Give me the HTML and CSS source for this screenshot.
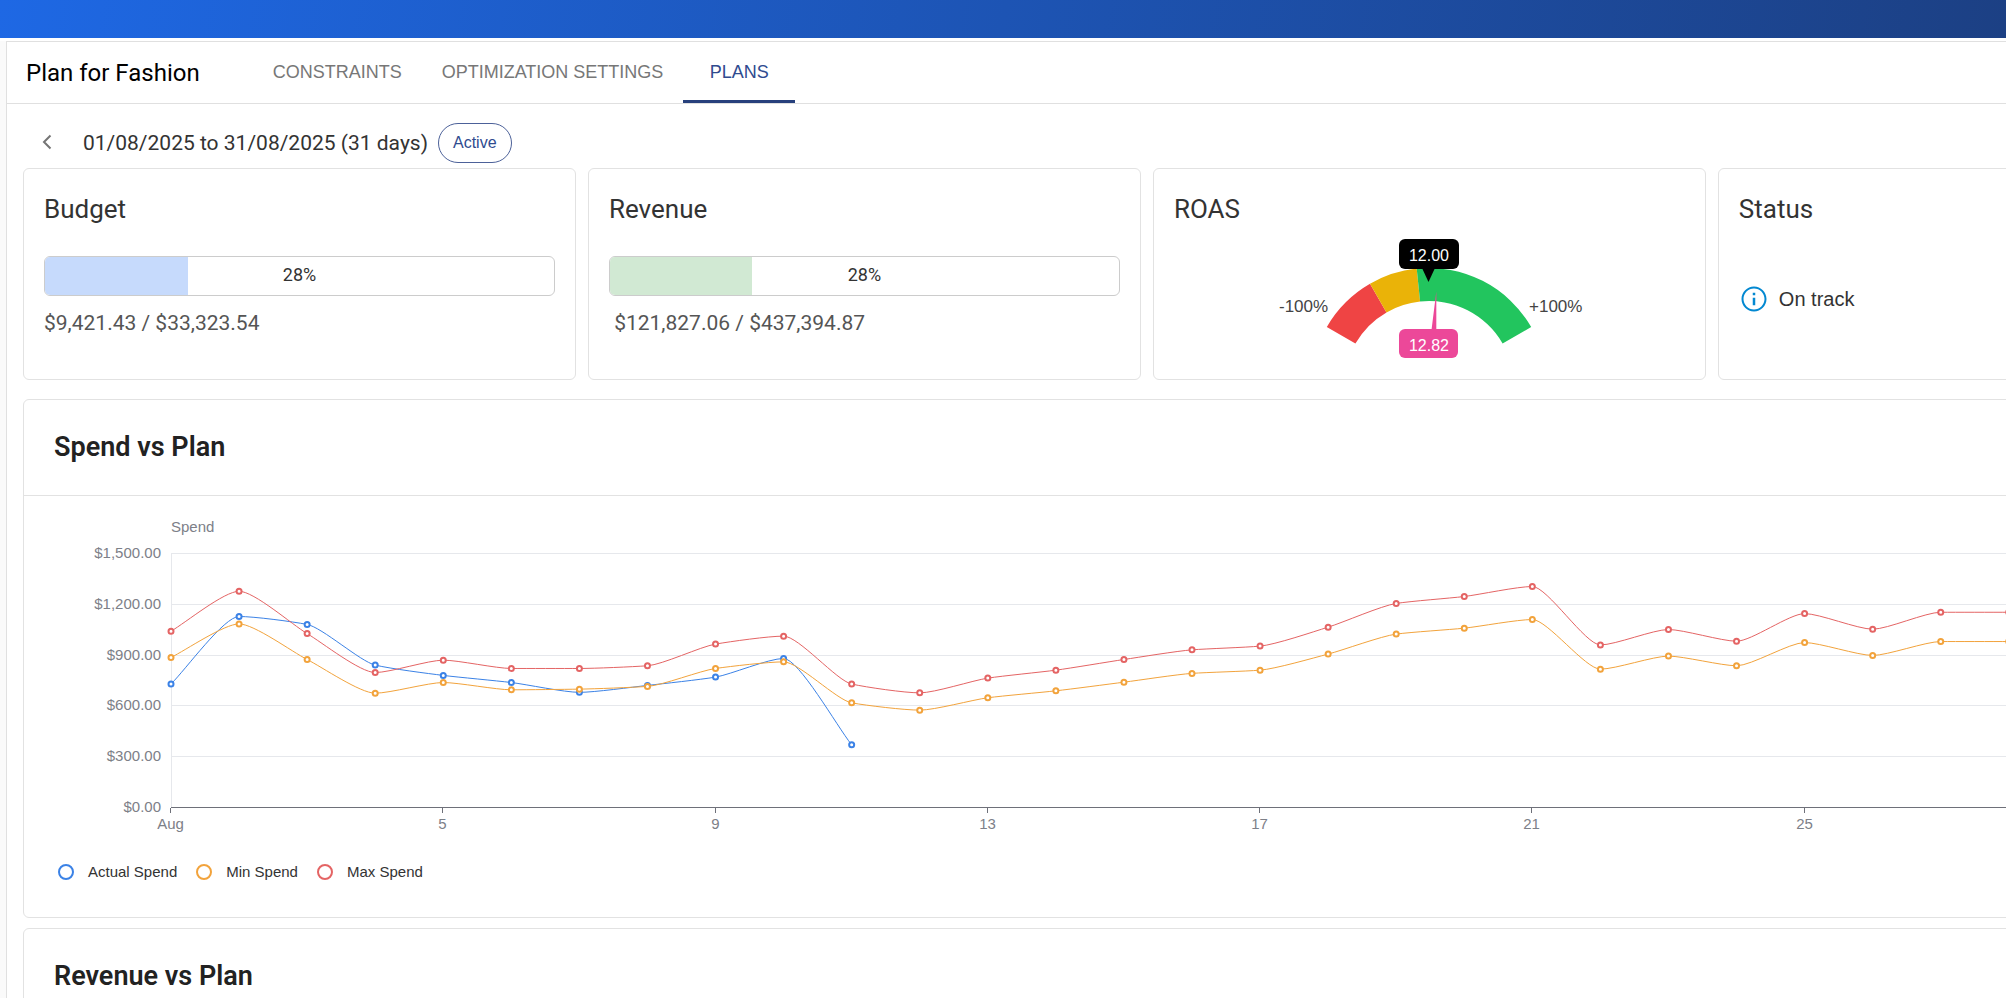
FILE: index.html
```html
<!DOCTYPE html>
<html lang="en">
<head>
    <meta charset="UTF-8">
    <meta name="viewport" content="width=device-width, initial-scale=1.0">
    <title>Plan for Fashion</title>
    <link rel="stylesheet" href="styles.css">
</head>
<body>
    <header class="top-bar"></header>

    <main class="page">
        <div class="page-header">
            <h1>Plan for Fashion</h1>
            <nav class="tabs">
                <button class="tab" type="button">CONSTRAINTS</button>
                <button class="tab" type="button">OPTIMIZATION SETTINGS</button>
                <button class="tab active" type="button">PLANS</button>
            </nav>
        </div>

        <div class="page-content">
            <div class="plan-row">
                <button class="back-btn" type="button" aria-label="Back">
                    <svg width="10" height="16" viewBox="0 0 10 16"><path d="M8.5 1.5 2 8l6.5 6.5" fill="none" stroke="#757575" stroke-width="2"/></svg>
                </button>
                <h2 class="plan-dates">01/08/2025 to 31/08/2025 (31 days)</h2>
                <span class="chip">Active</span>
            </div>

            <div class="cards">
                <section class="card">
                    <h3>Budget</h3>
                    <div class="progress">
                        <div class="progress-fill budget" style="width: 28%"></div>
                        <span class="progress-label">28%</span>
                    </div>
                    <p class="amount">$9,421.43 / $33,323.54</p>
                </section>

                <section class="card">
                    <h3>Revenue</h3>
                    <div class="progress">
                        <div class="progress-fill revenue" style="width: 28%"></div>
                        <span class="progress-label">28%</span>
                    </div>
                    <p class="amount">&nbsp;$121,827.06 / $437,394.87</p>
                </section>

                <section class="card">
                    <h3>ROAS</h3>
                    <svg class="gauge" viewBox="0 0 320 130">
                        <!-- arc, centre 160,154, radii 118 and 85 -->
                        <path fill="#ef4444" d="M57.8 95A118 118 0 0 1 101 51.8L117.5 80.4A85 85 0 0 0 86.4 111.5Z"/>
                        <path fill="#eab308" d="M101 51.8A118 118 0 0 1 147.7 36.6L151.1 69.5A85 85 0 0 0 117.5 80.4Z"/>
                        <path fill="#22c55e" d="M147.7 36.6A118 118 0 0 1 262.2 95L233.6 111.5A85 85 0 0 0 151.1 69.5Z"/>
                        <path fill="#ec4899" d="M162.5 98 167.3 59.5 167.3 98Z"/>
                        <rect x="130" y="7" width="60" height="30" rx="6" fill="#000"/>
                        <path d="M153 36H166L159.5 50Z" fill="#000"/>
                        <text class="gauge-value" x="160" y="29">12.00</text>
                        <rect x="130" y="97" width="59" height="29" rx="6" fill="#ec4899"/>
                        <text class="gauge-value" x="160" y="119">12.82</text>
                        <text class="gauge-label" x="10" y="80">-100%</text>
                        <text class="gauge-label" x="260" y="80">+100%</text>
                    </svg>
                </section>

                <section class="card">
                    <h3>Status</h3>
                    <div class="status">
                        <svg width="30" height="30" viewBox="0 0 24 24" fill="#0288d1"><path d="M11 7h2v2h-2zm0 4h2v6h-2zm1-9C6.480 2 2 6.480 2 12s4.480 10 10 10 10-4.480 10-10S17.520 2 12 2zm0 18.400c-4.630 0-8.400-3.770-8.400-8.400s3.770-8.400 8.400-8.400 8.400 3.770 8.400 8.400-3.770 8.400-8.400 8.400z"/></svg>
                        <span>On track</span>
                    </div>
                </section>
            </div>

            <section class="panel">
                <h2 class="panel-title">Spend vs Plan</h2>
                <svg class="chart" id="spendChart"></svg>
                <ul class="legend">
                    <li><i class="dot actual"></i>Actual Spend</li>
                    <li><i class="dot min"></i>Min Spend</li>
                    <li><i class="dot max"></i>Max Spend</li>
                </ul>
            </section>

            <section class="panel">
                <h2 class="panel-title">Revenue vs Plan</h2>
            </section>
        </div>
    </main>

    <script src="chart.js"></script>
</body>
</html>
```
FILE: styles.css
```css
* {
    margin: 0;
    padding: 0;
    box-sizing: border-box;
}

body {
    background-color: #fafafa;
    color: #333;
    font-family: 'Liberation Sans', Arial, sans-serif;
    height: 100vh;
    overflow: hidden;
}

button {
    background: none;
    border: none;
    font-family: inherit;
    cursor: pointer;
}

h1, h2, h3, .plan-dates, .amount, .progress-label {
    font-family: Roboto, sans-serif;
}

.top-bar {
    height: 38px;
    background: linear-gradient(100deg, #1e68e4, #1c4084);
}

/* the page is wider than the window and runs off to the right */
.page {
    width: 114%;
    padding-left: 6px;
    border-top: 3px solid #fff;
}

.page-header {
    display: flex;
    align-items: stretch;
    height: 63px;
    padding-left: 19px;
    background: #fff;
    border: 1px solid #e0e0e0;
}

.page-header h1 {
    align-self: center;
    margin-right: 53px;
    font-size: 24px;
    font-weight: 400;
    color: #000;
}

.tabs {
    display: flex;
}

.tab {
    padding: 0 20px;
    font-size: 18px;
    color: #777;
    border-bottom: 3px solid transparent;
    border-top: 3px solid transparent;
}

.tab.active {
    min-width: 112px;
    color: #2f4b8f;
    border-bottom-color: #27407c;
}

.page-content {
    padding: 19px 16px;
    background: #fff;
    border-left: 1px solid #e0e0e0;
}

.plan-row {
    display: flex;
    align-items: center;
    margin-bottom: 5px;
}

.back-btn {
    width: 48px;
    height: 40px;
    margin-right: 12px;
}

.plan-dates {
    margin-right: 10px;
    font-size: 21px;
    font-weight: 400;
}

.chip {
    padding: 0 14px;
    border: 1px solid #4c6199;
    border-radius: 20px;
    color: #2f4b8f;
    font-size: 16px;
    line-height: 38px;
}

.cards {
    display: grid;
    grid-template-columns: repeat(4, 1fr);
    gap: 12px;
    margin-bottom: 19px;
}

.card {
    height: 212px;
    padding: 20px;
    background: #fff;
    border: 1px solid #e2e2e2;
    border-radius: 6px;
}

.card h3 {
    font-size: 26px;
    font-weight: 400;
    line-height: 40px;
}

.progress {
    position: relative;
    height: 40px;
    margin-top: 27px;
    border: 1px solid #ccc;
    border-radius: 6px;
    overflow: hidden;
}

.progress-fill {
    height: 100%;
}

.progress-fill.budget {
    background: #c6dafc;
}

.progress-fill.revenue {
    background: #d1e9d3;
}

.progress-label {
    position: absolute;
    inset: 0;
    text-align: center;
    font-size: 18px;
    line-height: 36px;
}

.amount {
    margin-top: 11px;
    color: #555;
    font-size: 21px;
    line-height: 32px;
}

.gauge {
    display: block;
    width: 320px;
    height: 130px;
    margin: 3px auto 0;
}

.gauge-value {
    fill: #fff;
    font-size: 16px;
    text-anchor: middle;
}

.gauge-label {
    fill: #444;
    font-size: 17px;
}

.status {
    display: flex;
    align-items: center;
    gap: 10px;
    margin-top: 55px;
    font-size: 20px;
}

.panel {
    margin-bottom: 10px;
    background: #fff;
    border: 1px solid #e2e2e2;
    border-radius: 6px;
}

.panel-title {
    padding: 0 30px;
    border-bottom: 1px solid #e2e2e2;
    color: #222;
    font-size: 27px;
    font-weight: 600;
    line-height: 95px;
}

.chart {
    display: block;
    width: 100%;
    height: 344px;
    font-size: 15px;
}

.chart text {
    fill: #7d8088;
}

.chart .grid {
    stroke: #e6e8ec;
}

.chart .axis {
    stroke: #6e7079;
}

.chart .series {
    fill: none;
}

.chart circle {
    fill: #fff;
    stroke-width: 2;
}

.legend {
    display: flex;
    gap: 19px;
    padding: 20px 34px 33px;
    list-style: none;
    font-size: 15px;
    line-height: 24px;
}

.legend li {
    display: flex;
    align-items: center;
    gap: 14px;
}

.dot {
    width: 16px;
    height: 16px;
    border: 2px solid;
    border-radius: 50%;
}

.dot.actual {
    border-color: #3b82e6;
}

.dot.min {
    border-color: #f2a33c;
}

.dot.max {
    border-color: #e46464;
}
```
FILE: chart.js
```js
const actual = [732, 1131, 1084, 844, 783, 741, 683, 724, 773, 883, 373];
const min = [889, 1087, 877, 678, 741, 698, 702, 718, 824, 863, 621, 578, 651, 692, 743, 795,
    814, 909, 1027, 1062, 1113, 820, 897, 840, 977, 901, 983, 983, 960, 930, 900];
const max = [1044, 1280, 1030, 800, 873, 824, 824, 840, 968, 1015, 732, 680, 767, 814, 877, 934,
    956, 1068, 1208, 1249, 1308, 963, 1054, 985, 1148, 1056, 1156, 1156, 1130, 1100, 1060];

const series = [
    { values: actual, color: '#3b82e6' },
    { values: min, color: '#f2a33c' },
    { values: max, color: '#e46464' }
];

const svg = document.getElementById('spendChart');
const left = 147;
const right = 57;
const top0 = 58;
const bottom = 312;

// Lightly smoothed path, flat at every peak and dip
function smoothPath(points) {
    const slope = (a, b) => (b[1] - a[1]) / (b[0] - a[0]);
    const tangents = points.map((p, i) => {
        if (i === 0) return slope(p, points[1]);
        if (i === points.length - 1) return slope(points[i - 1], p);
        const before = slope(points[i - 1], p);
        const after = slope(p, points[i + 1]);
        return before * after <= 0 ? 0 : 2 * before * after / (before + after);
    });
    let d = `M${points[0]}`;
    for (let i = 1; i < points.length; i++) {
        const [x0, y0] = points[i - 1];
        const [x1, y1] = points[i];
        const h = (x1 - x0) * 0.22;
        d += `C${x0 + h},${y0 + h * tangents[i - 1]} ${x1 - h},${y1 - h * tangents[i]} ${x1},${y1}`;
    }
    return d;
}

function drawChart() {
    const end = svg.clientWidth - right;
    const x = day => left + day * (end - left) / 30;
    const y = value => bottom - value * (bottom - top0) / 1500;
    let html = `<text x="${left}" y="36">Spend</text>`;
    html += `<path class="grid" d="M${left + 0.5} ${top0}V${bottom}"/>`;

    for (let value = 0; value <= 1500; value += 300) {
        const label = '$' + value.toLocaleString('en-US') + '.00';
        const line = Math.round(y(value)) - 0.5;
        html += `<path class="${value ? 'grid' : 'axis'}" d="M${left} ${line}H${end}"/>`;
        html += `<text x="${left - 10}" y="${line + 4}" text-anchor="end">${label}</text>`;
    }

    for (let day = 0; day < 28; day += 4) {
        const tick = Math.round(x(day)) - 0.5;
        html += `<path class="axis" d="M${tick} ${bottom}v5"/>`;
        html += `<text x="${tick}" y="${bottom + 21}" text-anchor="middle">${day ? day + 1 : 'Aug'}</text>`;
    }

    series.forEach(({ values, color }) => {
        const points = values.map((value, day) => [x(day), y(value)]);
        html += `<path class="series" stroke="${color}" d="${smoothPath(points)}"/>`;
        points.forEach(([cx, cy]) => {
            html += `<circle cx="${cx}" cy="${cy}" r="2.5" stroke="${color}"/>`;
        });
    });

    svg.innerHTML = html;
}

drawChart();
window.addEventListener('resize', drawChart);
```
